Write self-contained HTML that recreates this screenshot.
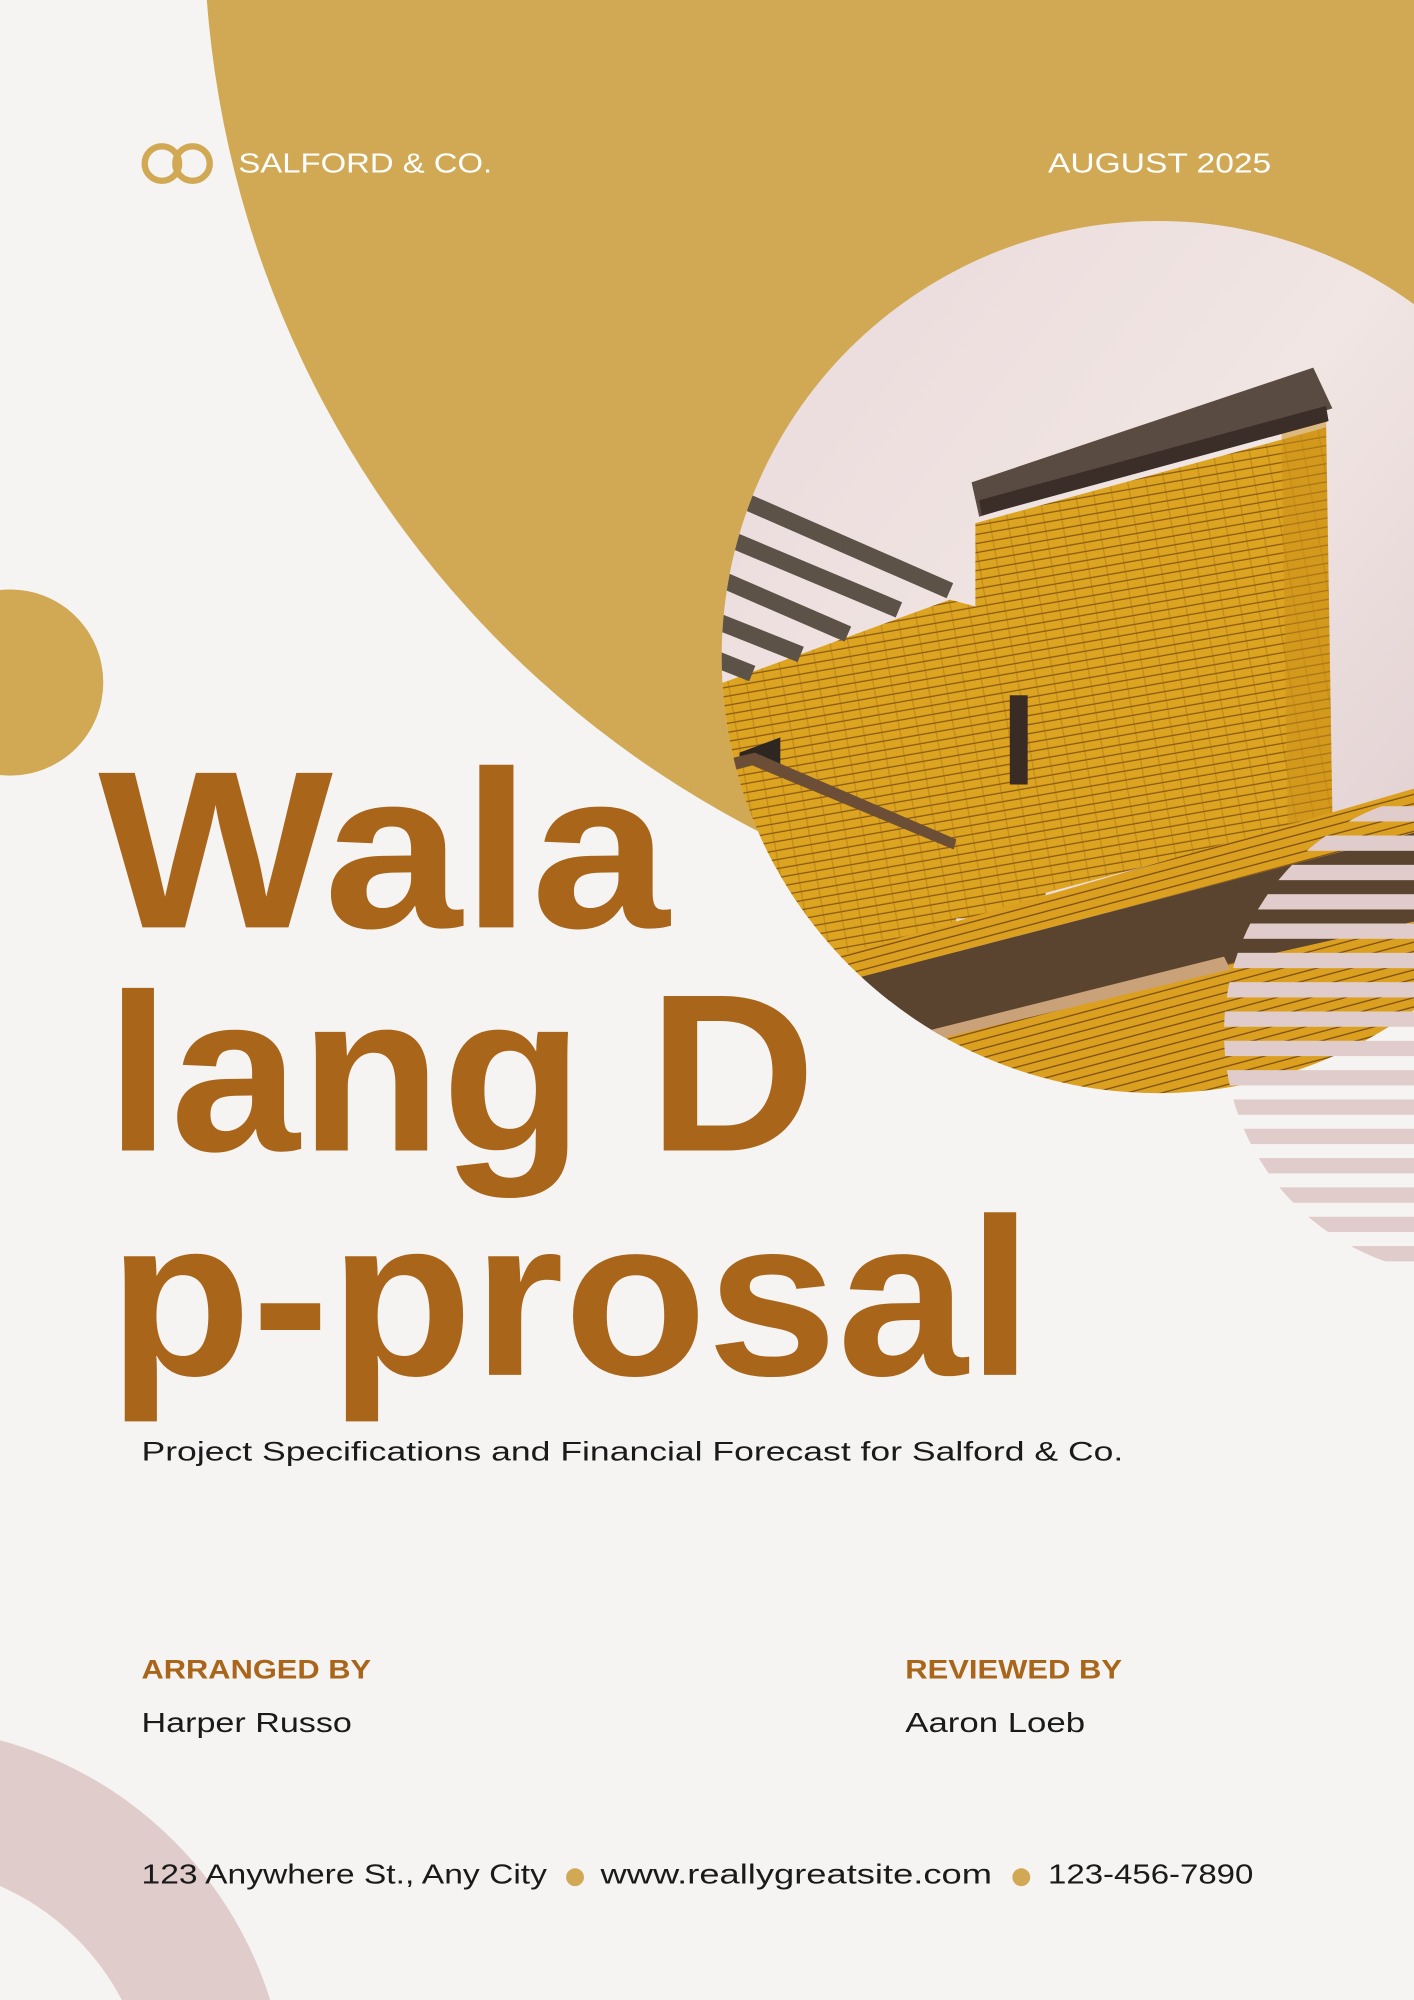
<!DOCTYPE html>
<html><head><meta charset="utf-8"><style>
html,body{margin:0;padding:0;background:#f5f4f2;width:1414px;height:2000px;overflow:hidden;}
svg{display:block;}
text{font-family:"Liberation Sans",sans-serif;}
</style></head><body>
<svg width="1414" height="2000" viewBox="0 0 1109 1568" xmlns="http://www.w3.org/2000/svg">
<defs>
<clipPath id="ph"><circle cx="908" cy="515" r="342"/></clipPath>
<clipPath id="st"><circle cx="1150" cy="810" r="190"/></clipPath>
<pattern id="brick" width="14" height="7" patternUnits="userSpaceOnUse" patternTransform="rotate(-10)">
<rect width="14" height="7" fill="#dca420"/><rect y="6" width="14" height="1" fill="#8a5a12"/><rect x="7" width="1" height="6" fill="#a87416" opacity=".5"/>
</pattern>
<pattern id="brick2" width="14" height="7" patternUnits="userSpaceOnUse" patternTransform="rotate(-15)">
<rect width="14" height="7" fill="#dca020"/><rect y="6" width="14" height="1" fill="#7a4e10"/>
</pattern>
<linearGradient id="sky" x1="0" y1="0" x2="1" y2="1"><stop offset="0" stop-color="#e9d9db"/><stop offset=".5" stop-color="#f1e6e3"/><stop offset="1" stop-color="#ddc9cd"/></linearGradient>
</defs>
<rect width="1109" height="1568" fill="#f5f4f2"/>
<circle cx="960" cy="-60" r="800" fill="#d1a955"/>
<circle cx="8" cy="535" r="73" fill="#d1a955"/>
<circle cx="-80" cy="1660" r="252" fill="none" stroke="#e0cccb" stroke-width="108"/>
<g clip-path="url(#ph)">
<rect x="560" y="170" width="560" height="700" fill="url(#sky)"/>
<polygon points="540,545 745,470 820,490 820,720 540,720" fill="url(#brick)"/>
<polygon points="765,410 1040,335 1045,640 820,700 765,700" fill="url(#brick)"/>
<polygon points="1005,330 1040,320 1045,640 1010,648" fill="#c98e18" opacity=".5"/>
<polygon points="762,378 1030,288 1045,320 768,405" fill="#5a4b42"/>
<polygon points="768,392 1040,318 1042,330 770,404" fill="#3b2e28"/>
<rect x="792" y="545" width="14" height="70" fill="#3a2c25"/>
<polygon points="580,590 612,578 612,605 580,605" fill="#2e2620"/>
<polygon points="550,605 590,592 750,660 750,760 560,760" fill="url(#brick)"/>
<polygon points="550,600 592,590 750,658 748,666 590,600 552,610" fill="#6b4e35"/>
<g stroke="#5d5248" stroke-width="13" stroke-linecap="butt">
<line x1="578" y1="390" x2="745" y2="463"/>
<line x1="550" y1="413" x2="705" y2="478"/>
<line x1="545" y1="445" x2="665" y2="497"/>
<line x1="540" y1="478" x2="628" y2="513"/>
<line x1="540" y1="508" x2="590" y2="528"/>
</g>
<polygon points="620,760 1120,615 1120,650 640,775" fill="url(#brick2)"/>
<polygon points="640,775 1120,650 1120,720 720,815 660,810" fill="#5a4430"/>
<polygon points="700,815 1120,720 1120,880 700,880" fill="url(#brick2)"/>
<polygon points="700,815 960,750 965,760 705,822" fill="#c9a27a"/>
</g>
<g clip-path="url(#st)" fill="#e0cccb">
<rect x="900" y="632" width="260" height="12"/>
<rect x="900" y="655" width="260" height="12"/>
<rect x="900" y="678" width="260" height="12"/>
<rect x="900" y="701" width="260" height="12"/>
<rect x="900" y="724" width="260" height="12"/>
<rect x="900" y="747" width="260" height="12"/>
<rect x="900" y="770" width="260" height="12"/>
<rect x="900" y="793" width="260" height="12"/>
<rect x="900" y="816" width="260" height="12"/>
<rect x="900" y="839" width="260" height="12"/>
<rect x="900" y="862" width="260" height="12"/>
<rect x="900" y="885" width="260" height="12"/>
<rect x="900" y="908" width="260" height="12"/>
<rect x="900" y="931" width="260" height="12"/>
<rect x="900" y="954" width="260" height="12"/>
<rect x="900" y="977" width="260" height="12"/>
</g>
<circle cx="127" cy="128" r="13.5" fill="none" stroke="#d1a955" stroke-width="5"/>
<circle cx="151" cy="128" r="13.5" fill="none" stroke="#d1a955" stroke-width="5"/>
<text x="187" y="135" font-size="22" fill="#fff" textLength="199" lengthAdjust="spacingAndGlyphs">SALFORD &amp; CO.</text>
<text x="822" y="135" font-size="22" fill="#fff" textLength="175" lengthAdjust="spacingAndGlyphs">AUGUST 2025</text>
<g fill="#a9661a" font-weight="bold" font-size="176">
<text x="77" y="727" textLength="448" lengthAdjust="spacingAndGlyphs">Wala</text>
<text x="83" y="902" textLength="557" lengthAdjust="spacingAndGlyphs">lang D</text>
<text x="85" y="1078" textLength="725" lengthAdjust="spacingAndGlyphs">p-prosal</text>
</g>
<text x="111" y="1145" font-size="21" fill="#1a1a1a" textLength="770" lengthAdjust="spacingAndGlyphs">Project Specifications and Financial Forecast for Salford &amp; Co.</text>
<text x="111" y="1316" font-size="21" font-weight="bold" fill="#a9661a" textLength="180" lengthAdjust="spacingAndGlyphs">ARRANGED BY</text>
<text x="710" y="1316" font-size="21" font-weight="bold" fill="#a9661a" textLength="170" lengthAdjust="spacingAndGlyphs">REVIEWED BY</text>
<text x="111" y="1358" font-size="22" fill="#1a1a1a" textLength="165" lengthAdjust="spacingAndGlyphs">Harper Russo</text>
<text x="710" y="1358" font-size="22" fill="#1a1a1a" textLength="141" lengthAdjust="spacingAndGlyphs">Aaron Loeb</text>
<text x="111" y="1477" font-size="22" fill="#1a1a1a" textLength="318" lengthAdjust="spacingAndGlyphs">123 Anywhere St., Any City</text>
<circle cx="451" cy="1472" r="7" fill="#d1a955"/>
<text x="471" y="1477" font-size="22" fill="#1a1a1a" textLength="307" lengthAdjust="spacingAndGlyphs">www.reallygreatsite.com</text>
<circle cx="801" cy="1472" r="7" fill="#d1a955"/>
<text x="822" y="1477" font-size="22" fill="#1a1a1a" textLength="161" lengthAdjust="spacingAndGlyphs">123-456-7890</text>
</svg>
</body></html>
